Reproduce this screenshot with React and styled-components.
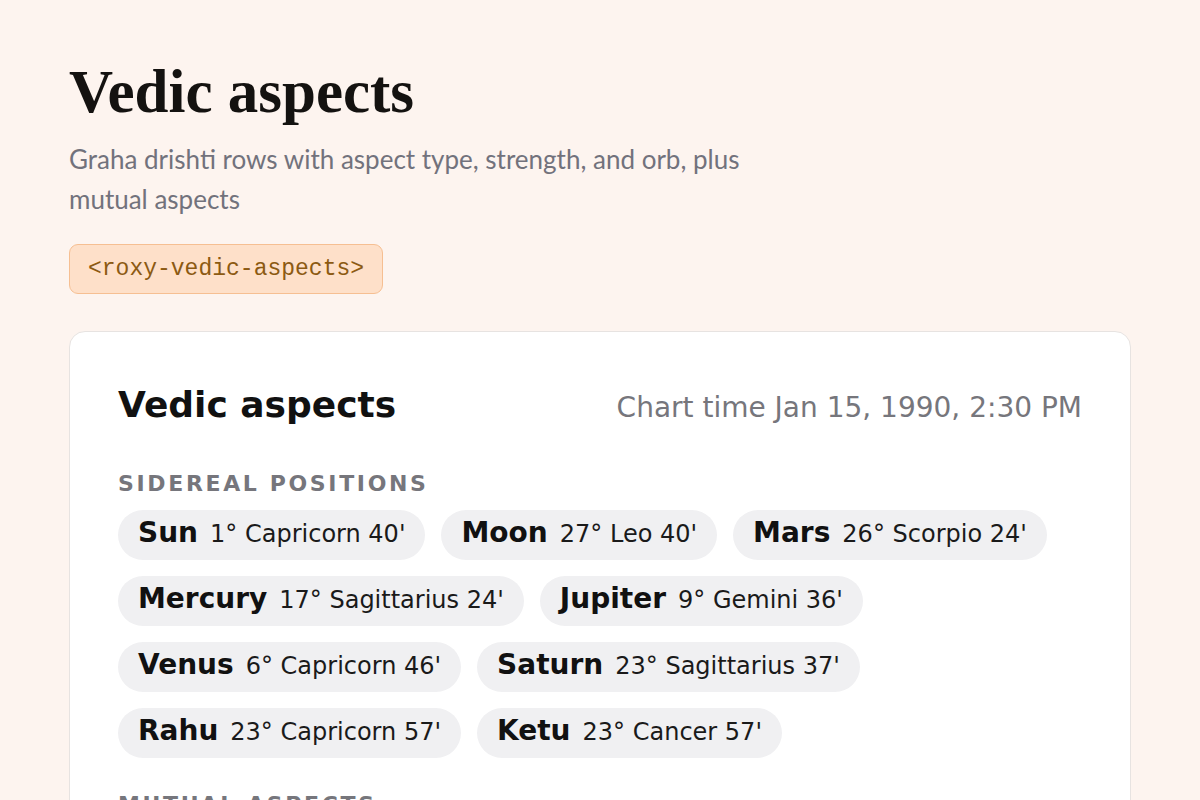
import React from "react";
import styled, { createGlobalStyle } from "styled-components";

const GlobalStyle = createGlobalStyle`
  html, body {
    margin: 0;
    padding: 0;
    background: #fdf4ef;
  }
  * { box-sizing: border-box; }
`;

const Page = styled.main`
  min-height: 800px;
  padding: 57px 69px 0;
  background: #fdf4ef;
`;

const Heading = styled.h1`
  margin: 0;
  font-family: "Liberation Serif", "Times New Roman", serif;
  font-weight: 700;
  font-size: 61px;
  line-height: 1.15;
  color: #141210;
`;

const Lede = styled.p`
  margin: 12px 0 0;
  max-width: 700px;
  font-family: Lato, "Noto Sans", sans-serif;
  font-size: 26px;
  line-height: 40px;
  color: #72727c;
`;

const TagBadge = styled.code`
  display: inline-block;
  margin-top: 25px;
  padding: 11px 18px;
  font-family: "Liberation Mono", "Courier New", monospace;
  font-size: 23px;
  line-height: 26px;
  color: #8c5a12;
  background: #fee0c9;
  border: 1px solid #f6bf92;
  border-radius: 9px;
`;

const Card = styled.section`
  margin-top: 37px;
  padding: 52px 48px 48px;
  background: #ffffff;
  border: 1px solid #e7e3e1;
  border-radius: 16px;
  font-family: "DejaVu Sans", Verdana, sans-serif;
`;

const CardHeader = styled.header`
  display: flex;
  align-items: baseline;
  justify-content: space-between;
`;

const CardTitle = styled.h2`
  margin: 0;
  font-size: 36px;
  font-weight: 700;
  line-height: 1.164;
  color: #111111;
`;

const ChartTime = styled.span`
  font-size: 28px;
  color: #76767c;
`;

const Section = styled.div`
  margin-top: ${(p) => p.$gap}px;
`;

const SectionLabel = styled.h3`
  margin: 0 0 13px;
  font-size: 22px;
  font-weight: 700;
  letter-spacing: 0.12em;
  line-height: 1.164;
  text-transform: uppercase;
  color: #76767c;
`;

const ChipList = styled.div`
  display: flex;
  flex-wrap: wrap;
  gap: 16px;
`;

const Chip = styled.span`
  display: inline-flex;
  align-items: baseline;
  gap: 12px;
  height: 50px;
  padding: 0 20px 4px;
  line-height: 46px;
  background: #f0f0f2;
  border-radius: 999px;
  white-space: nowrap;
`;

const Body = styled.b`
  font-size: 28px;
  font-weight: 700;
  color: #111111;
`;

const Position = styled.span`
  font-size: 24px;
  color: #1a1a1a;
`;

const positions = [
  ["Sun", "1° Capricorn 40'"],
  ["Moon", "27° Leo 40'"],
  ["Mars", "26° Scorpio 24'"],
  ["Mercury", "17° Sagittarius 24'"],
  ["Jupiter", "9° Gemini 36'"],
  ["Venus", "6° Capricorn 46'"],
  ["Saturn", "23° Sagittarius 37'"],
  ["Rahu", "23° Capricorn 57'"],
  ["Ketu", "23° Cancer 57'"],
];

export default function App() {
  return (
    <>
      <GlobalStyle />
      <Page>
        <Heading>Vedic aspects</Heading>
        <Lede>
          Graha drishti rows with aspect type, strength, and orb, plus mutual
          aspects
        </Lede>
        <TagBadge>&lt;roxy-vedic-aspects&gt;</TagBadge>
        <Card>
          <CardHeader>
            <CardTitle>Vedic aspects</CardTitle>
            <ChartTime>Chart time Jan 15, 1990, 2:30 PM</ChartTime>
          </CardHeader>
          <Section $gap={45}>
            <SectionLabel>Sidereal positions</SectionLabel>
            <ChipList>
              {positions.map(([body, pos]) => (
                <Chip key={body}>
                  <Body>{body}</Body>
                  <Position>{pos}</Position>
                </Chip>
              ))}
            </ChipList>
          </Section>
          <Section $gap={34}>
            <SectionLabel>Mutual aspects</SectionLabel>
          </Section>
        </Card>
      </Page>
    </>
  );
}
